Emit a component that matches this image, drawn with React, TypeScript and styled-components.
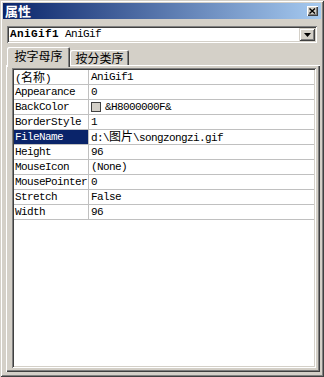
import React from "react";
import styled, { createGlobalStyle } from "styled-components";

const FACE = "#d4d0c8";
const MONO = `"Liberation Mono", "Noto Sans CJK SC", monospace`;
const CJK = `"Noto Sans CJK SC", "Noto Sans", sans-serif`;

const GlobalStyle = createGlobalStyle`
  html, body { margin: 0; padding: 0; background: ${FACE}; }
  #root { width: 324px; height: 377px; }
`;

const Window = styled.div`
  box-sizing: border-box;
  width: 324px;
  height: 377px;
  padding: 3px;
  background: ${FACE};
  box-shadow: inset 1px 1px ${FACE}, inset -1px -1px #404040,
    inset 2px 2px #ffffff, inset -2px -2px #808080;
  display: flex;
  flex-direction: column;
`;

const TitleBar = styled.div`
  height: 16px;
  flex: none;
  display: flex;
  align-items: center;
  justify-content: space-between;
  padding: 0 3px 0 2px;
  background: linear-gradient(to right, #0a246a, #a6caf0);
`;

const TitleText = styled.span`
  color: #ffffff;
  font-family: ${CJK};
  font-weight: bold;
  font-size: 13px;
  line-height: 16px;
`;

const CloseButton = styled.div`
  width: 11px;
  height: 10px;
  background: ${FACE};
  box-shadow: inset 1px 1px #ffffff, inset -1px -1px #404040,
    inset -2px -2px #808080;
  display: flex;
  align-items: center;
  justify-content: center;
`;

const Combo = styled.div`
  flex: none;
  height: 17px;
  box-sizing: border-box;
  margin: 7px 4px 0 4px;
  padding: 2px;
  background: #ffffff;
  box-shadow: inset 1px 1px #808080, inset -1px -1px #ffffff,
    inset 2px 2px #404040, inset -2px -2px ${FACE};
  display: flex;
  align-items: center;
`;

const ComboText = styled.div`
  flex: 1;
  padding-left: 1px;
  font-family: ${MONO};
  font-size: 11px;
  letter-spacing: -0.6px;
  line-height: 13px;
  color: #000;
  white-space: nowrap;
`;

const BoldName = styled.span`
  font-weight: bold;
  letter-spacing: 0.4px;
`;

const DropButton = styled.div`
  width: 16px;
  height: 13px;
  background: ${FACE};
  box-shadow: inset 1px 1px ${FACE}, inset -1px -1px #404040,
    inset 2px 2px #ffffff, inset -2px -2px #808080;
  display: flex;
  align-items: center;
  justify-content: center;
`;

const TabStrip = styled.div`
  flex: none;
  height: 22px;
  padding-left: 4px;
  display: flex;
  align-items: flex-end;
`;

const Tab = styled.div<{ $active?: boolean; $w: number }>`
  position: relative;
  z-index: ${(p) => (p.$active ? 1 : 0)};
  box-sizing: border-box;
  width: ${(p) => p.$w}px;
  height: ${(p) => (p.$active ? 20 : 15)}px;
  margin-bottom: ${(p) => (p.$active ? -2 : 0)}px;
  padding-bottom: ${(p) => (p.$active ? 2 : 0)}px;
  background: ${FACE};
  border-top-left-radius: 2px;
  border-top-right-radius: 2px;
  box-shadow: inset 1px 1px #ffffff, inset -1px 0 #404040, inset -2px 0 #808080;
  display: flex;
  align-items: center;
  justify-content: center;
  font-family: ${CJK};
  font-size: 12px;
  line-height: 14px;
  color: #000;
`;

const Panel = styled.div`
  flex: 1;
  margin: 0 1px 2px 3px;
  padding: 3px 4px 4px 6px;
  background: ${FACE};
  box-shadow: inset 1px 1px #ffffff, inset -1px -1px #404040,
    inset -2px -2px #808080;
  display: flex;
  flex-direction: column;
`;

const Grid = styled.div`
  flex: 1;
  padding: 2px;
  background: #ffffff;
  box-shadow: inset 1px 1px #808080, inset -1px -1px #ffffff,
    inset 2px 2px #404040, inset -2px -2px ${FACE};
`;

const Row = styled.div`
  display: flex;
  height: 15px;
  box-sizing: border-box;
  border-bottom: 1px solid #c0c0c0;
  font-family: ${MONO};
  font-size: 11px;
  letter-spacing: -0.6px;
  line-height: 14px;
  color: #000;
  white-space: nowrap;
`;

const NameCell = styled.div<{ $selected?: boolean }>`
  width: 75px;
  flex: none;
  padding-left: 1px;
  box-sizing: border-box;
  border-right: 1px solid #c0c0c0;
  background: ${(p) => (p.$selected ? "#0a246a" : "transparent")};
  color: ${(p) => (p.$selected ? "#ffffff" : "#000")};
`;

const ValueCell = styled.div`
  flex: 1;
  padding-left: 2px;
  display: flex;
  align-items: center;
`;

const Cjk = styled.span`
  font-family: ${CJK};
  font-size: 12px;
  letter-spacing: 0;
  line-height: 14px;
`;

const Swatch = styled.span`
  width: 10px;
  height: 10px;
  box-sizing: border-box;
  border: 1px solid #404040;
  background: ${FACE};
  margin-right: 4px;
  flex: none;
`;

type Prop = { name: React.ReactNode; value: React.ReactNode; selected?: boolean; swatch?: boolean };

const props: Prop[] = [
  { name: <>(<Cjk>名称</Cjk>)</>, value: "AniGif1" },
  { name: "Appearance", value: "0" },
  { name: "BackColor", value: "&H8000000F&", swatch: true },
  { name: "BorderStyle", value: "1" },
  { name: "FileName", value: <>d:\<Cjk>图片</Cjk>\songzongzi.gif</>, selected: true },
  { name: "Height", value: "96" },
  { name: "MouseIcon", value: "(None)" },
  { name: "MousePointer", value: "0" },
  { name: "Stretch", value: "False" },
  { name: "Width", value: "96" },
];

export default function App() {
  return (
    <>
      <GlobalStyle />
      <Window>
        <TitleBar>
          <TitleText>属性</TitleText>
          <CloseButton>
            <svg width="7" height="6" viewBox="0 0 7 6">
              <path d="M0.5 0.5 L6 5.5 M6 0.5 L0.5 5.5" stroke="#000" strokeWidth="1.4" />
            </svg>
          </CloseButton>
        </TitleBar>
        <Combo>
          <ComboText>
            <BoldName>AniGif1</BoldName> AniGif
          </ComboText>
          <DropButton>
            <svg width="7" height="4" viewBox="0 0 7 4">
              <polygon points="0,0 7,0 3.5,4" fill="#000" />
            </svg>
          </DropButton>
        </Combo>
        <TabStrip>
          <Tab $active $w={63}>按字母序</Tab>
          <Tab $w={59}>按分类序</Tab>
        </TabStrip>
        <Panel>
          <Grid>
            {props.map((p, i) => (
              <Row key={i}>
                <NameCell $selected={p.selected}>{p.name}</NameCell>
                <ValueCell>
                  {p.swatch && <Swatch />}
                  <span>{p.value}</span>
                </ValueCell>
              </Row>
            ))}
          </Grid>
        </Panel>
      </Window>
    </>
  );
}
